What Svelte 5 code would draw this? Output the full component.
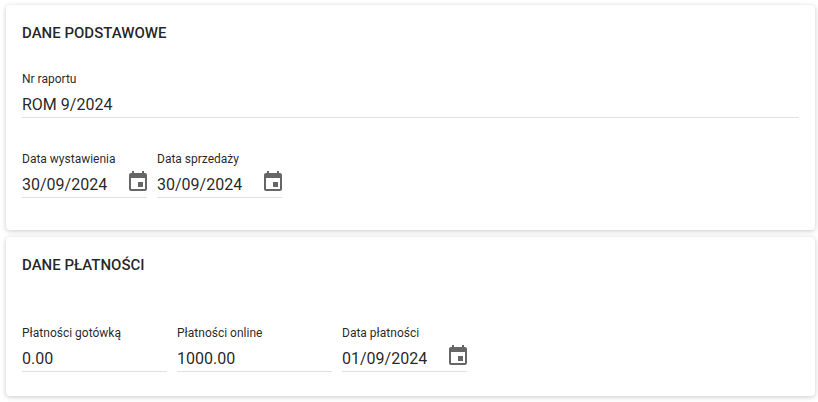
<script>
  const dates = [
    { label: 'Data wystawienia', value: '30/09/2024' },
    { label: 'Data sprzedaży', value: '30/09/2024' }
  ];
</script>

{#snippet calendar()}
  <svg class="cal" viewBox="0 0 24 24" width="24" height="24" aria-hidden="true">
    <path d="M17 12h-5v5h5v-5zM16 1v2H8V1H6v2H5c-1.11 0-1.99.9-1.99 2L3 19c0 1.1.89 2 2 2h14c1.1 0 2-.9 2-2V5c0-1.1-.9-2-2-2h-1V1h-2zm3 18H5V8h14v11z" />
  </svg>
{/snippet}

{#snippet field(label, value, cls, withIcon)}
  <div class="field {cls}">
    <div class="label">{label}</div>
    <div class="control">
      <span class="value">{value}</span>
      {#if withIcon}{@render calendar()}{/if}
    </div>
  </div>
{/snippet}

<div class="page">
  <section class="card first">
    <h2>DANE PODSTAWOWE</h2>
    <div class="row top">
      {@render field('Nr raportu', 'ROM 9/2024', 'full', false)}
    </div>
    <div class="row second">
      {#each dates as d}
        {@render field(d.label, d.value, 'date', true)}
      {/each}
    </div>
  </section>

  <section class="card payments">
    <h2>DANE PŁATNOŚCI</h2>
    <div class="row pay">
      {@render field('Płatności gotówką', '0.00', 'cash', false)}
      {@render field('Płatności online', '1000.00', 'online', false)}
      {@render field('Data płatności', '01/09/2024', 'date', true)}
    </div>
  </section>
</div>

<style>
  :global(body) {
    margin: 0;
    background: #fff;
  }

  .page {
    display: flex;
    flex-direction: column;
    gap: 7px;
    padding: 5px 3px 6px 6px;
    font-family: Roboto, 'Liberation Sans', sans-serif;
    color: rgba(0, 0, 0, 0.87);
  }

  .card {
    box-sizing: border-box;
    padding: 0 16px;
    background: #fff;
    border-radius: 4px;
    box-shadow: 0 1px 5px 0 rgba(0, 0, 0, 0.22);
  }

  .card.first {
    height: 225px;
  }

  .card.payments {
    height: 159px;
  }

  h2 {
    margin: 0;
    padding-top: 18px;
    font-size: 15px;
    font-weight: 500;
    line-height: 20px;
  }

  .row {
    display: flex;
    gap: 10px;
  }

  .row.top {
    margin-top: 29px;
  }

  .row.second {
    margin-top: 34px;
  }

  .row.pay {
    margin-top: 51px;
  }

  .field {
    box-sizing: border-box;
    border-bottom: 1px solid #e0e0e0;
  }

  .full {
    flex: 1;
  }

  .date {
    width: 125px;
  }

  .cash {
    width: 145px;
  }

  .online {
    width: 155px;
  }

  .label {
    font-size: 12px;
    line-height: 14px;
  }

  .control {
    display: flex;
    align-items: center;
    justify-content: space-between;
    height: 26px;
    margin-top: 5px;
  }

  .value {
    font-size: 16px;
    line-height: 19px;
    padding-top: 1px;
  }

  .cal {
    fill: #666;
    margin: -4px -3px 0 0;
    flex: none;
  }
</style>
